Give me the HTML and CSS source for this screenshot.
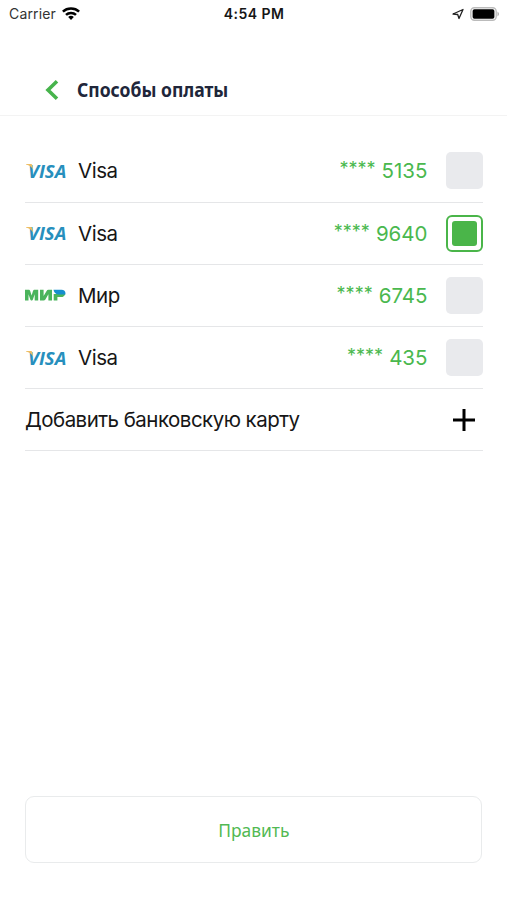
FILE: index.html
```html
<!DOCTYPE html>
<html lang="ru">
<head>
<meta charset="utf-8">
<title>Способы оплаты</title>
<link rel="stylesheet" href="styles.css">
</head>
<body>
<header class="status">
  <div class="carrier"><span>Carrier</span>
    <svg width="18" height="13" viewBox="0 0 18 13" fill="none" stroke="#000" stroke-width="2.500"><path d="M.9 4.600C5.300.4 12.700.4 17.100 4.600M4 7.900c2.700-2.600 7.300-2.600 10 0"/><path d="M6.200 9.900c1.600-1.500 4-1.500 5.600 0L9 12.900z" fill="#000" stroke="none"/></svg>
  </div>
  <time class="clock">4:54 PM</time>
  <div class="indicators">
    <svg width="12" height="12" viewBox="0 0 12 12" fill="none" stroke="#222" stroke-width="1.300" stroke-linejoin="round"><path d="M1 6 11 1.500 7 10.500 5.700 6.500z"/></svg>
    <svg width="30" height="14" viewBox="0 0 30 14"><rect x=".8" y=".8" width="25.400" height="12.400" rx="3.600" fill="#fff" stroke="#bbb" stroke-width="1.400"/><rect x="2.600" y="2.200" width="21.800" height="9.600" rx="1.800"/><path d="M27.500 4.600q3 2.400 0 4.800z" fill="#aaa"/></svg>
  </div>
</header>
<nav class="nav">
  <svg class="back" width="14" height="20" viewBox="0 0 14 20" fill="none" stroke="#47b44c" stroke-width="3.600"><path d="M12 1.300 3 10l9 8.700"/></svg>
  <h1 class="title">Способы оплаты</h1>
</nav>
<main class="cards">
  <div class="row">
    <span class="logo visa"><svg class="flick" width="8" height="7" viewBox="0 0 8 7"><path d="M0 0h4.500c1 0 1.600.4 1.800 1.300l.8 4.200C5.700 3 3.200 1.100 0 .5z" fill="#edbd63"/></svg><span class="visa-text">VISA</span></span>
    <span class="name">Visa</span><span class="number"><span class="stars">****</span><span>5135</span></span><span class="check"></span>
  </div>
  <div class="row">
    <span class="logo visa"><svg class="flick" width="8" height="7" viewBox="0 0 8 7"><path d="M0 0h4.500c1 0 1.600.4 1.800 1.300l.8 4.200C5.700 3 3.200 1.100 0 .5z" fill="#edbd63"/></svg><span class="visa-text">VISA</span></span>
    <span class="name">Visa</span><span class="number"><span class="stars">****</span><span>9640</span></span><span class="check selected"></span>
  </div>
  <div class="row">
    <svg class="logo mir" viewBox="0 0 42 12">
      <path d="M0 11.500V.8h3.500c.9 0 1.400.4 1.700 1.300l1.400 4.300L8 2.100C8.300 1.200 8.800.8 9.700.8h3.500v10.700H9.700V5.200l-1.800 5.200c-.3.800-.7 1.100-1.300 1.100s-1-.3-1.300-1.100L3.500 5.200v6.300zM15 11.500V.8h3.600v6.300l3-5.200c.4-.7 1-1.100 1.800-1.100H27v10.700h-3.600V5.200l-3 5.200c-.4.700-1 1.100-1.800 1.100zM28.700 4.900h11.600c-.6 2-2.100 3.200-4.200 3.200h-3.700v3.400h-3.700z" fill="#4bb45c"/>
      <path d="M28.500.8h8c2.500 0 4 1.500 4 3.600l-.2 1h-7c-2.700 0-4.400-2.100-4.800-4.600z" fill="#168fce"/>
    </svg>
    <span class="name">Мир</span><span class="number"><span class="stars">****</span><span>6745</span></span><span class="check"></span>
  </div>
  <div class="row">
    <span class="logo visa"><svg class="flick" width="8" height="7" viewBox="0 0 8 7"><path d="M0 0h4.500c1 0 1.600.4 1.800 1.300l.8 4.200C5.700 3 3.200 1.100 0 .5z" fill="#edbd63"/></svg><span class="visa-text">VISA</span></span>
    <span class="name">Visa</span><span class="number"><span class="stars">****</span><span>435</span></span><span class="check"></span>
  </div>
  <div class="row"><span class="add">Добавить банковскую карту</span><svg class="plus" width="22" height="22" viewBox="0 0 22 22" stroke="#000" stroke-width="3"><path d="M11 0v22M0 11h22"/></svg></div>
</main>
<button class="edit" type="button"><span>Править</span></button>
</body>
</html>
```
FILE: styles.css
```css
* { box-sizing: border-box; }
body {
  margin: 0;
  width: 507px;
  height: 900px;
  display: flex;
  flex-direction: column;
  background: #fff;
  color: #161616;
  font-family: Inter, "Liberation Sans", sans-serif;
  overflow: hidden;
}
.status {
  height: 27px;
  flex: none;
  display: grid;
  grid-template-columns: 1fr auto 1fr;
  align-items: center;
  padding: 0 7px 0 9px;
  font-size: 14px;
}
.carrier, .indicators { display: flex; align-items: center; gap: 6px; }
.carrier { color: #333; letter-spacing: .15px; }
.indicators { justify-content: flex-end; }
.clock { font-weight: 600; font-size: 14px; letter-spacing: .45px; margin-left: -1px; }
.nav {
  height: 89px;
  flex: none;
  display: flex;
  align-items: center;
  padding: 37px 0 0 45px;
  border-bottom: 1px solid #f3f3f3;
}
.title {
  margin: 0 0 0 18px;
  font: 700 19px/26px "Noto Sans", sans-serif;
  color: #20263a;
  transform: scaleX(.923);
  transform-origin: left;
}
.cards { padding: 24.300px 24.500px 0 25px; flex: none; }
.row {
  height: 62.230px;
  display: flex;
  align-items: center;
  border-bottom: 1px solid #e5e6e8;
  font-size: 20.500px;
}
.logo { width: 42px; height: 16px; flex: none; }
.mir { height: 12px; }
.visa { position: relative; }
.visa-text {
  display: block;
  width: max-content;
  margin-left: 3px;
  font: italic 700 17.500px/17px "Open Sans", sans-serif;
  color: #278fbd;
  transform: scaleX(1.06);
  transform-origin: left;
}
.flick { position: absolute; left: 1px; top: 1.500px; z-index: 1; }
.name { margin-left: 11px; letter-spacing: -.45px; }
.number { margin-left: auto; display: flex; gap: 6px; color: #4ab84e; }
.stars { font-size: 18px; }
.check { width: 37px; height: 37px; margin-left: 18px; border-radius: 5px; background: #e9eaed; }
.selected {
  display: grid;
  place-items: center;
  border: 2.500px solid #4ab549;
  border-radius: 6px;
  background: #fff;
}
.selected::before { content: ""; width: 25px; height: 25px; border-radius: 3px; background: #4ab549; }
.add { letter-spacing: -.53px; }
.plus { margin: 0 8px 0 auto; }
.edit {
  margin: auto 25px 37px;
  height: 67px;
  flex: none;
  border: 1px solid #e9ebec;
  border-radius: 9px;
  background: #fff;
  color: #52b953;
  font: 400 18.500px/26px "Noto Sans", sans-serif;
}
.edit span { display: inline-block; transform: scaleX(.94); }
```
